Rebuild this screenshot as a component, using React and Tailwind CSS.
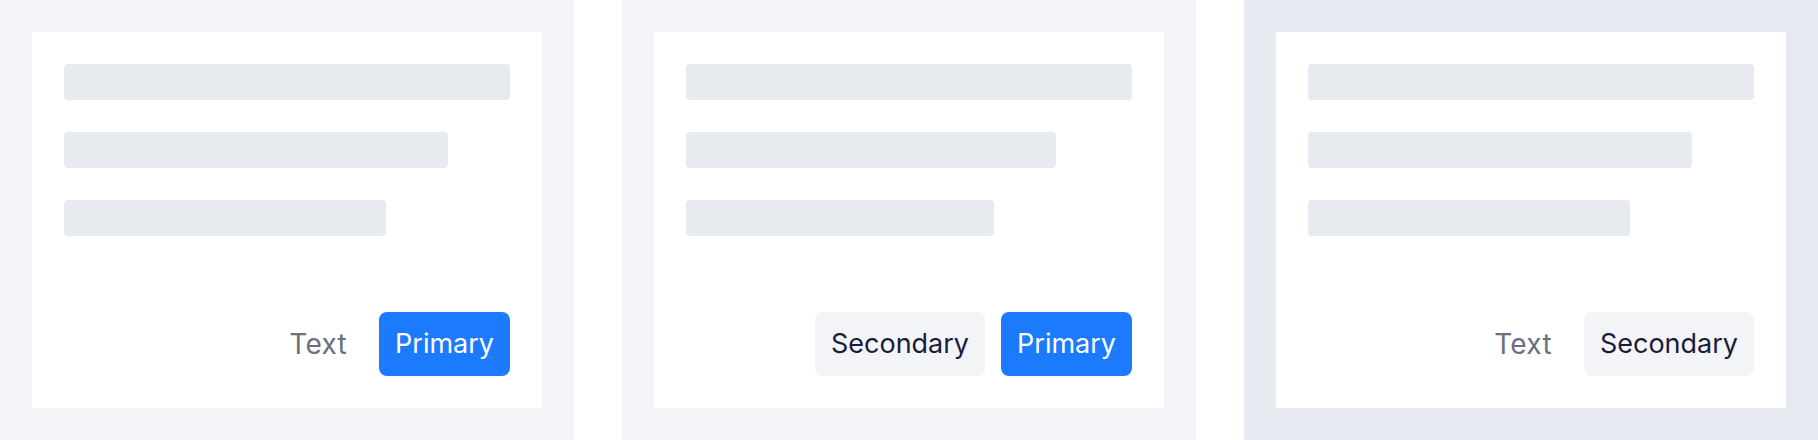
const Bars = ({ second, third }) => (
	<div className="flex flex-col gap-8">
		<div className="h-9 w-full rounded bg-[#e7eaef]" />
		<div className={`h-9 rounded bg-[#e7eaef] ${second}`} />
		<div className={`h-9 rounded bg-[#e7eaef] ${third}`} />
	</div>
);

const TextButton = () => (
	<button className="h-16 px-4 rounded-lg text-[28px] tracking-[0.3px] text-[#6b6f82]">
		Text
	</button>
);

const SecondaryButton = () => (
	<button className="h-16 px-4 rounded-lg bg-[#f3f4f8] text-[27px] text-[#1b1c3a]">
		Secondary
	</button>
);

const PrimaryButton = () => (
	<button className="h-16 px-4 rounded-lg bg-[#1c7bfc] text-[27px] text-white">
		Primary
	</button>
);

const Panel = ({ bg, second = "w-[384px]", third = "w-[322px]", children }) => (
	<div className={`w-[574px] h-[440px] p-8 ${bg}`}>
		{/* Card */}
		<div className="h-full bg-white p-8 flex flex-col justify-between">
			<Bars second={second} third={third} />
			<div className="flex justify-end gap-4">{children}</div>
		</div>
	</div>
);

const App = () => {
	return (
		<div
			className="w-[1818px] h-[440px] bg-white flex gap-12"
			style={{ fontFamily: "Inter, 'Noto Sans', sans-serif" }}
		>
			<Panel bg="bg-[#f3f4f8]">
				<TextButton />
				<PrimaryButton />
			</Panel>
			<Panel bg="bg-[#f3f4f8]" second="w-[370px]" third="w-[308px]">
				<SecondaryButton />
				<PrimaryButton />
			</Panel>
			<Panel bg="bg-[#e7eaf0]">
				<TextButton />
				<SecondaryButton />
			</Panel>
		</div>
	);
};

export default App;
